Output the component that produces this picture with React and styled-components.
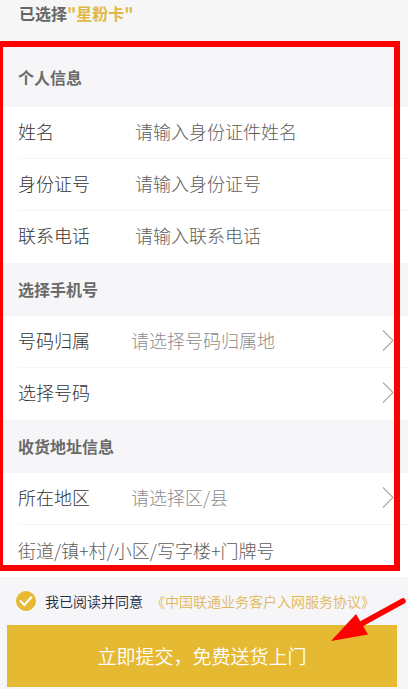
import React from 'react';
import styled, { createGlobalStyle } from 'styled-components';

const GlobalStyle = createGlobalStyle`
  * {
    box-sizing: border-box;
  }
  body {
    margin: 0;
    background-color: #f6f5f7;
    color: #333;
    font-family: 'Noto Sans CJK SC', sans-serif;
    font-size: 18px;
    line-height: 24px;
  }
  input,
  select,
  button {
    font: inherit;
  }
`;

const Page = styled.main`
  width: 100%;
  overflow: hidden;
`;

const Header = styled.header`
  padding: 1px 19px 16px;
  background-color: #f5f6f5;
`;

const Chosen = styled.h1`
  margin: 0;
  color: #666;
  font-size: 16px;
  font-weight: 700;
`;

const CardName = styled.span`
  color: #e2b844;
`;

const FormArea = styled.div`
  position: relative;
  padding-bottom: 6px;
  background-color: #fff;
`;

const Highlight = styled.div`
  position: absolute;
  top: 0;
  right: 8px;
  bottom: 0;
  left: -3px;
  border: 6px solid #fe0000;
  pointer-events: none;
`;

const SectionTitle = styled.h2`
  margin: 0;
  padding: ${({ $first }) => ($first ? '24px 18px 18px' : '14px 18px 15px')};
  background-color: #f6f5f7;
  color: #6a6a6a;
  font-size: 16px;
  font-weight: 700;
`;

const Row = styled.div`
  display: flex;
  align-items: center;
  margin-left: 18px;
  padding: 12px 14px 15px 0;
  border-bottom: 1px solid ${({ $last }) => ($last ? '#fff' : '#f5f5f5')};
`;

const Label = styled.label`
  flex: none;
  width: ${({ $wide }) => ($wide ? '117px' : '113px')};
  font-weight: 300;
`;

const Input = styled.input`
  flex: 1;
  min-width: 0;
  height: 24px;
  padding: 0;
  border: 0;
  outline: none;
  background: none;
  color: #333;
  font-weight: 300;
  &::placeholder {
    color: #5c5c5c;
    opacity: 1;
  }
`;

const Select = styled.select`
  flex: 1;
  min-width: 0;
  height: 24px;
  padding: 0;
  border: 0;
  outline: none;
  appearance: none;
  background: none;
  color: #8c8c8c;
  font-weight: 300;
`;

const Arrow = styled.svg`
  flex: none;
  width: 12px;
  height: 22px;
`;

const AddressRow = styled.div`
  display: flex;
  padding: 13px 18px 3px;
`;

const Footer = styled.footer`
  position: relative;
  padding: 12px 11px 2px 7px;
  border-top: 6px solid #fff;
  background-color: #f6f5f7;
`;

const Agreement = styled.div`
  display: flex;
  align-items: center;
  padding: 0 0 12px 9px;
  color: #222a3c;
  font-size: 14px;
  font-weight: 350;
  white-space: nowrap;
`;

const CheckWrap = styled.span`
  display: grid;
  margin-right: 9px;
  > * {
    grid-area: 1 / 1;
  }
`;

const Checkbox = styled.input`
  width: 20px;
  height: 20px;
  margin: 0;
  border: 1px solid #e5b932;
  border-radius: 50%;
  appearance: none;
  &:checked {
    background-color: #e5b932;
  }
  &:not(:checked) + svg {
    visibility: hidden;
  }
`;

const Tick = styled.svg`
  width: 20px;
  height: 20px;
  pointer-events: none;
`;

const Terms = styled.a`
  margin-left: 8px;
  color: #e2b65a;
  text-decoration: none;
`;

const Submit = styled.button`
  display: block;
  width: 100%;
  padding: 19px 0;
  border: 0;
  background-color: #e6b932;
  color: #fff;
  font-size: 19px;
  font-weight: 350;
  line-height: 24px;
`;

const Pointer = styled.svg`
  position: absolute;
  top: 14px;
  right: 0;
  width: 80px;
  height: 52px;
  pointer-events: none;
`;

const TextRow = ({ id, label, placeholder, last }) => (
  <Row $last={last}>
    <Label htmlFor={id} $wide>
      {label}
    </Label>
    <Input id={id} placeholder={placeholder} />
  </Row>
);

const SelectRow = ({ id, label, placeholder, last }) => (
  <Row $last={last}>
    <Label htmlFor={id}>{label}</Label>
    <Select id={id} defaultValue="">
      <option value="">{placeholder}</option>
    </Select>
    <Arrow viewBox="0 0 12 22" fill="none" stroke="#aaa" strokeWidth="1.1">
      <path d="M1 1.5L11 11.5L1 21.5" />
    </Arrow>
  </Row>
);

const App = () => {
  return (
    <Page>
      <GlobalStyle />
      <Header>
        <Chosen>
          已选择<CardName>"星粉卡"</CardName>
        </Chosen>
      </Header>
      <form onSubmit={(e) => e.preventDefault()}>
        <FormArea>
          <SectionTitle $first>个人信息</SectionTitle>
          <TextRow id="name" label="姓名" placeholder="请输入身份证件姓名" />
          <TextRow id="idcard" label="身份证号" placeholder="请输入身份证号" />
          <TextRow id="phone" label="联系电话" placeholder="请输入联系电话" last />
          <SectionTitle>选择手机号</SectionTitle>
          <SelectRow id="place" label="号码归属" placeholder="请选择号码归属地" />
          <SelectRow id="number" label="选择号码" placeholder="" last />
          <SectionTitle>收货地址信息</SectionTitle>
          <SelectRow id="area" label="所在地区" placeholder="请选择区/县" />
          <AddressRow>
            <Input
              aria-label="详细地址"
              placeholder="街道/镇+村/小区/写字楼+门牌号"
            />
          </AddressRow>
          <Highlight />
        </FormArea>
        <Footer>
          <Agreement>
            <CheckWrap>
              <Checkbox id="agree" type="checkbox" defaultChecked />
              <Tick viewBox="0 0 20 20" fill="none" stroke="#fff" strokeWidth="2.2">
                <path d="M4 9.5L8.3 14L15.8 5.8" />
              </Tick>
            </CheckWrap>
            <label htmlFor="agree">我已阅读并同意</label>
            <Terms href="#terms">《中国联通业务客户入网服务协议》</Terms>
          </Agreement>
          <Submit type="submit">立即提交，免费送货上门</Submit>
          <Pointer viewBox="0 0 80 52">
            <path d="M34 32.5L75 10" stroke="#fe0000" strokeWidth="5.5" strokeLinecap="round" />
            <path d="M3 50L28 23L40 43.5Z" fill="#fe0000" />
          </Pointer>
        </Footer>
      </form>
    </Page>
  );
};

export default App;
